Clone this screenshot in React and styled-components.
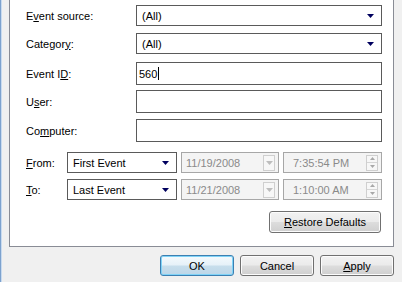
import styled, { createGlobalStyle } from "styled-components";

const GlobalStyle = createGlobalStyle`
  html, body {
    margin: 0;
    padding: 0;
    background: #f0f0f0;
  }
  body {
    font-family: "Liberation Sans", Arial, sans-serif;
    font-size: 11px;
    color: #000;
  }
  * {
    box-sizing: border-box;
  }
`;

const Window = styled.div`
  width: 402px;
  height: 282px;
  display: flex;
  flex-direction: column;
  background: #f0f0f0;
  border-left: 1px solid #7da2ce;
  box-shadow: inset 1px 0 0 #c9dbef;
  overflow: hidden;
`;

const Panel = styled.div`
  margin-left: 8px;
  width: 385px;
  height: 247px;
  background: #fff;
  border: 1px solid #898c95;
  border-top: none;
  padding: 5px 11px 0 15px;
  display: flex;
  flex-direction: column;
`;

const Row = styled.div`
  display: grid;
  grid-template-columns: ${(p) => (p.$wide ? "111px 1fr" : "38px 110px 98px 99px")};
  column-gap: ${(p) => (p.$wide ? "0" : "4px")};
  align-items: center;
  height: ${(p) => p.$h || 21}px;
  margin-top: ${(p) => p.$mt || 0}px;
`;

const Label = styled.span`
  white-space: nowrap;
  padding-left: 1px;
  u {
    text-decoration: underline;
    text-underline-offset: 1px;
  }
`;

const Box = styled.div`
  height: 100%;
  display: flex;
  align-items: center;
  border: 1px solid ${(p) => (p.$disabled ? "#a7a7a7" : "#5a5a5a")};
  background: ${(p) => (p.$disabled ? "#f4f4f4" : "#fff")};
  color: ${(p) => (p.$disabled ? "#8a8a8a" : "#000")};
  padding: 0 ${(p) => p.$pr ?? 4}px 0 ${(p) => p.$pl ?? 4}px;
  white-space: nowrap;
`;

const Value = styled.span`
  flex: 1;
  display: flex;
  align-items: center;
`;

const Caret = styled.span`
  display: inline-block;
  width: 1px;
  height: 13px;
  background: #000;
  margin-left: 1px;
`;

const Arrow = styled.svg`
  width: 7px;
  height: 4px;
  flex: none;
`;

const MiniButton = styled.div`
  width: 12px;
  height: 16px;
  flex: none;
  border: 1px solid #cfcfcf;
  background: #f7f7f7;
  display: flex;
  align-items: center;
  justify-content: center;
`;

const Spinner = styled.div`
  width: 12px;
  height: 16px;
  flex: none;
  border: 1px solid #cfcfcf;
  background: #f7f7f7;
  display: flex;
  flex-direction: column;
`;

const SpinHalf = styled.div`
  flex: 1;
  display: flex;
  align-items: center;
  justify-content: center;
  & + & {
    border-top: 1px solid #d6d6d6;
  }
`;

const RestoreRow = styled.div`
  display: flex;
  justify-content: flex-end;
  margin-top: 11px;
  padding-right: 1px;
`;

const Footer = styled.div`
  display: flex;
  justify-content: flex-end;
  gap: 6px;
  padding: 8px 8px 0 0;
`;

const Button = styled.button`
  font-family: "Liberation Sans", Arial, sans-serif;
  font-size: 11px;
  color: #000;
  width: ${(p) => p.$w || 74}px;
  height: ${(p) => p.$h || 21}px;
  padding: 0;
  border-radius: 3px;
  border: 1px solid ${(p) => (p.$default ? "#3c7fb1" : "#707070")};
  background: linear-gradient(
    to bottom,
    ${(p) => (p.$default ? "#f4fafd 0%, #e6f1f8 48%, #c7deec 52%, #bcd6e8 100%" : "#f2f2f2 0%, #ebebeb 48%, #dddddd 52%, #cfcfcf 100%")}
  );
  box-shadow: inset 0 0 0 1px ${(p) => (p.$default ? "#7fd3f7" : "#fcfcfc")};
  u {
    text-underline-offset: 1px;
  }
`;

const DownArrow = ({ color = "#00005e" }) => (
  <Arrow viewBox="0 0 7 4">
    <polygon points="0,0 7,0 3.5,4" fill={color} />
  </Arrow>
);

const Combo = ({ children }) => (
  <Box $pl={5} $pr={7}>
    <Value>{children}</Value>
    <DownArrow />
  </Box>
);

const DateField = ({ value }) => (
  <Box $disabled $pl={4} $pr={3}>
    <Value>{value}</Value>
    <MiniButton>
      <svg width="7" height="4" viewBox="0 0 7 4">
        <polygon points="0,0 7,0 3.5,4" fill="#bdbdbd" />
      </svg>
    </MiniButton>
  </Box>
);

const TimeField = ({ value }) => (
  <Box $disabled $pl={9} $pr={3}>
    <Value>{value}</Value>
    <Spinner>
      <SpinHalf>
        <svg width="5" height="3" viewBox="0 0 5 3">
          <polygon points="0,3 5,3 2.5,0" fill="#a8a8a8" />
        </svg>
      </SpinHalf>
      <SpinHalf>
        <svg width="5" height="3" viewBox="0 0 5 3">
          <polygon points="0,0 5,0 2.5,3" fill="#a8a8a8" />
        </svg>
      </SpinHalf>
    </Spinner>
  </Box>
);

const App = () => {
  return (
    <>
      <GlobalStyle />
      <Window>
        <Panel>
          <Row $wide>
            <Label>E<u>v</u>ent source:</Label>
            <Combo>(All)</Combo>
          </Row>
          <Row $wide $mt={7}>
            <Label>Categor<u>y</u>:</Label>
            <Combo>(All)</Combo>
          </Row>
          <Row $wide $mt={8} $h={23}>
            <Label>Event I<u>D</u>:</Label>
            <Box $pl={2}>
              <Value>
                560
                <Caret />
              </Value>
            </Box>
          </Row>
          <Row $wide $mt={5} $h={23}>
            <Label>U<u>s</u>er:</Label>
            <Box />
          </Row>
          <Row $wide $mt={6} $h={23}>
            <Label>Co<u>m</u>puter:</Label>
            <Box />
          </Row>
          <Row $mt={10}>
            <Label><u>F</u>rom:</Label>
            <Combo>First Event</Combo>
            <DateField value="11/19/2008" />
            <TimeField value="7:35:54 PM" />
          </Row>
          <Row $mt={6}>
            <Label><u>T</u>o:</Label>
            <Combo>Last Event</Combo>
            <DateField value="11/21/2008" />
            <TimeField value="1:10:00 AM" />
          </Row>
          <RestoreRow>
            <Button $w={112} $h={22}>
              <u>R</u>estore Defaults
            </Button>
          </RestoreRow>
        </Panel>
        <Footer>
          <Button $default>OK</Button>
          <Button>Cancel</Button>
          <Button>
            <u>A</u>pply
          </Button>
        </Footer>
      </Window>
    </>
  );
};

export default App;
